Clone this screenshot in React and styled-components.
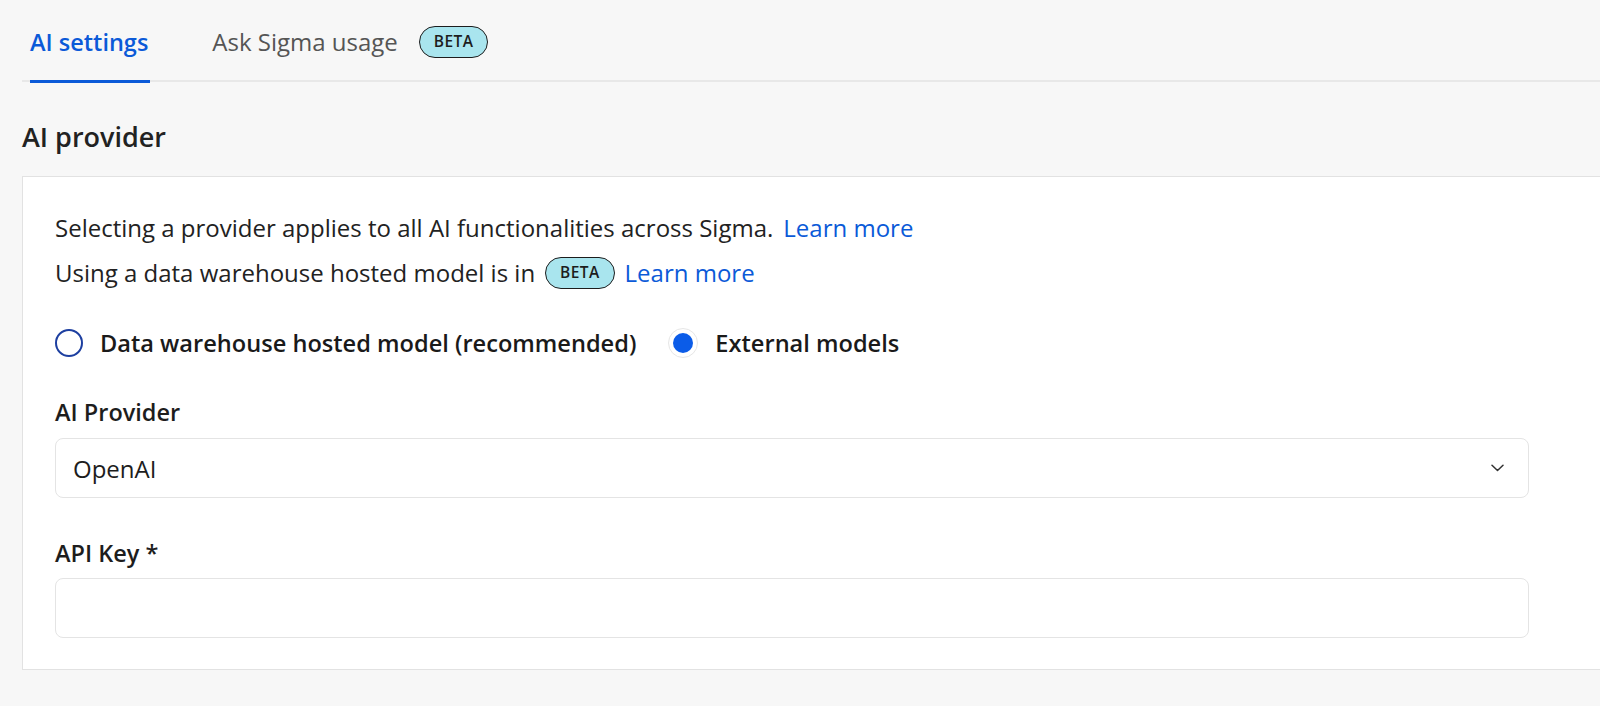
import React from "react";
import styled, { createGlobalStyle } from "styled-components";

const Global = createGlobalStyle`
  html, body {
    margin: 0;
    padding: 0;
    background: #f7f7f7;
    font-family: "Open Sans", "Noto Sans", sans-serif;
    color: #1d1d1d;
  }
`;

const Page = styled.div`
  width: 1600px;
  height: 706px;
  overflow: hidden;
  padding-left: 22px;
  box-sizing: border-box;
`;

const Tabs = styled.div`
  display: flex;
  height: 82px;
  box-sizing: border-box;
  border-bottom: 2px solid #e8e8e8;
  gap: 62px;
  padding-left: 8px;
`;

const Tab = styled.div`
  display: flex;
  align-items: flex-end;
  align-self: flex-start;
  gap: 21px;
  height: 83px;
  box-sizing: border-box;
  padding: 0 ${(p) => (p.active ? 2 : 0)}px 22px 0;
  font-size: ${(p) => (p.active ? 23.5 : 24)}px;
  line-height: 32px;
  font-weight: ${(p) => (p.active ? 600 : 400)};
  color: ${(p) => (p.active ? "#0b5ad8" : "#555")};
  border-bottom: 3px solid ${(p) => (p.active ? "#0b5ad8" : "transparent")};
`;

const Badge = styled.span`
  display: inline-flex;
  align-items: center;
  justify-content: center;
  height: 32px;
  padding: 0 14px;
  border: 1.5px solid #1d1d1d;
  border-radius: 999px;
  background: #a9e5ee;
  font-size: 15.5px;
  line-height: 1;
  font-weight: 600;
  color: #1d1d1d;
  letter-spacing: 0.4px;
  box-sizing: border-box;
`;

const Heading = styled.h2`
  margin: 37px 0 21px;
  font-size: 27px;
  line-height: 36px;
  font-weight: 600;
  color: #222;
`;

const Card = styled.div`
  background: #fff;
  border: 1px solid #e2e2e2;
  border-right: none;
  padding: 34px 71px 31px 32px;
  box-sizing: border-box;
`;

const Line = styled.p`
  margin: 0 0 11px;
  font-size: 24px;
  line-height: 34px;
  display: flex;
  align-items: center;
  gap: 10px;
  color: #222;
`;

const Link = styled.a`
  color: #0b5ad8;
  text-decoration: none;
`;

const RadioRow = styled.div`
  display: flex;
  align-items: center;
  margin-top: 36px;
  height: 34px;
  gap: 32px;
`;

const RadioOption = styled.label`
  display: flex;
  align-items: center;
  gap: 17px;
  font-size: 23.6px;
  line-height: 34px;
  font-weight: 600;
  color: #1a1a1a;
`;

const RadioCircle = styled.span`
  width: ${(p) => (p.checked ? 30 : 28)}px;
  height: ${(p) => (p.checked ? 30 : 28)}px;
  border-radius: 50%;
  box-sizing: border-box;
  border: ${(p) => (p.checked ? "1.5px solid #e6e6e6" : "2px solid #1d3fa0")};
  display: flex;
  align-items: center;
  justify-content: center;
  &::after {
    content: "";
    width: 20px;
    height: 20px;
    border-radius: 50%;
    background: ${(p) => (p.checked ? "#0b5ce8" : "transparent")};
  }
`;

const Field = styled.div`
  margin-top: ${(p) => p.mt || 0}px;
`;

const Label = styled.div`
  font-size: 23.5px;
  line-height: 32px;
  font-weight: 600;
  color: #1d1d1d;
  margin-bottom: ${(p) => p.mb || 10}px;
`;

const Box = styled.div`
  height: 60px;
  border: 1.5px solid #e4e4e4;
  border-radius: 8px;
  box-sizing: border-box;
  display: flex;
  align-items: center;
  justify-content: space-between;
  padding: 0 24px 0 17px;
  font-size: 24px;
  color: #1d1d1d;
`;

const Chevron = () => (
  <svg width="13" height="8" viewBox="0 0 13 8" fill="none">
    <path d="M1 1.2l5.5 5.3L12 1.2" stroke="#333" strokeWidth="1.5" strokeLinecap="round" strokeLinejoin="round" />
  </svg>
);

export default function App() {
  return (
    <Page>
      <Global />
      <Tabs>
        <Tab active>AI settings</Tab>
        <Tab>
          Ask Sigma usage <Badge>BETA</Badge>
        </Tab>
      </Tabs>
      <Heading>AI provider</Heading>
      <Card>
        <Line>
          Selecting a provider applies to all AI functionalities across Sigma.
          <Link href="#">Learn more</Link>
        </Line>
        <Line>
          Using a data warehouse hosted model is in <Badge>BETA</Badge>
          <Link href="#">Learn more</Link>
        </Line>
        <RadioRow>
          <RadioOption>
            <RadioCircle />
            Data warehouse hosted model (recommended)
          </RadioOption>
          <RadioOption>
            <RadioCircle checked />
            External models
          </RadioOption>
        </RadioRow>
        <Field mt={36}>
          <Label>AI Provider</Label>
          <Box>
            OpenAI
            <Chevron />
          </Box>
        </Field>
        <Field mt={39}>
          <Label mb={9}>API Key *</Label>
          <Box />
        </Field>
      </Card>
    </Page>
  );
}
